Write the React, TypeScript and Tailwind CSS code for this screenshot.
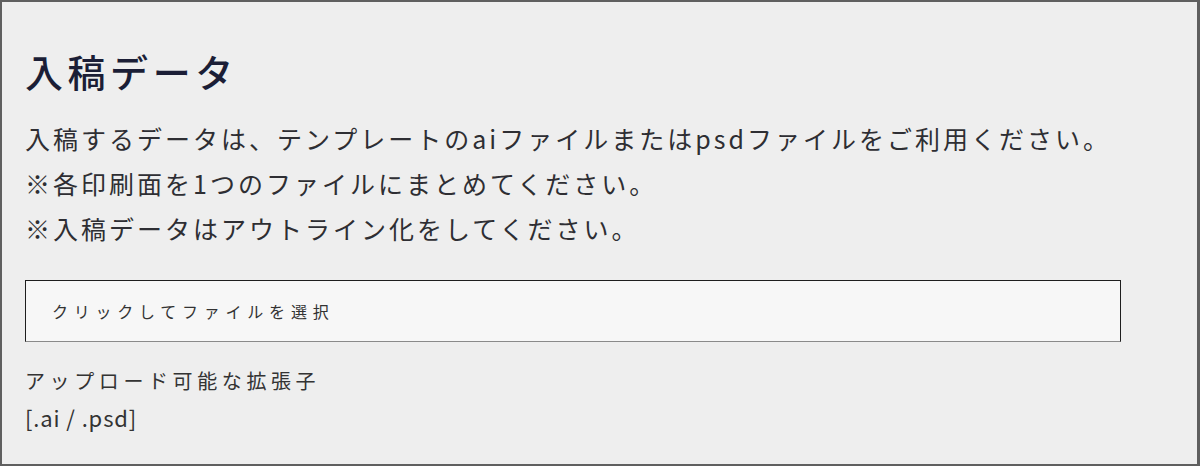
import React from 'react';

const notes = [
  '入稿するデータは、テンプレートのaiファイルまたはpsdファイルをご利用ください。',
  '※各印刷面を1つのファイルにまとめてください。',
  '※入稿データはアウトライン化をしてください。',
];

function UploadSection() {
  return (
    <div className="w-[1200px] h-[466px] border-2 border-r-[3px] border-[#5f5f5f] bg-[#eeeeee] pl-[23px] pt-[42px] font-['Noto_Sans_CJK_JP',sans-serif]">
      <h2 className="text-[38px] leading-[54px] font-medium tracking-[0.12em] text-[#1b1e36]">入稿データ</h2>
      <div className="mt-[18px] flex flex-col">
        {notes.map((line, i) => (
          <p key={i} className="text-[25px] leading-[45px] tracking-[0.12em] text-[#2e2e33]">{line}</p>
        ))}
      </div>
      <div className="mt-[29px] w-[1096px] h-[62px] border border-[#1e1e1e] border-b-[#8a8a8a] bg-[#f7f7f7] pl-[26px] flex items-center">
        <span className="text-[16px] tracking-[0.36em] text-[#333]">クリックしてファイルを選択</span>
      </div>
      <div className="mt-[21px] flex flex-col text-[20px] leading-[36px] text-[#333]">
        <p className="tracking-[0.23em]">アップロード可能な拡張子</p>
        <p className="text-[22px] tracking-[0.04em]">[.ai / .psd]</p>
      </div>
    </div>
  );
}

export default function App() {
  return <UploadSection />;
}
